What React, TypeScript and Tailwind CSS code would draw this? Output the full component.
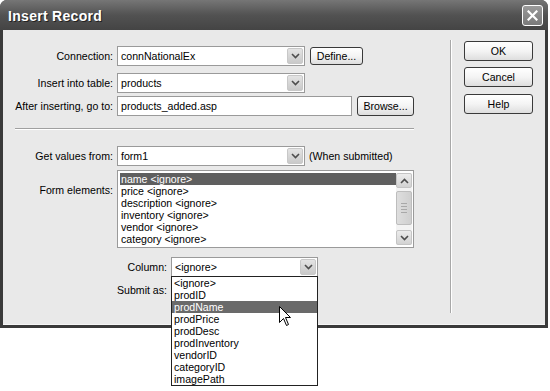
import React from "react";

const Chevron = ({ up = false }: { up?: boolean }) => (
  <svg width="9" height="6" viewBox="0 0 9 6" className={up ? "rotate-180" : ""}>
    <path d="M1 1 L4.5 4.5 L8 1" fill="none" stroke="#4d4d4d" strokeWidth="1.6" />
  </svg>
);

const ArrowBtn = () => (
  <div className="absolute right-[1px] top-[1px] bottom-[1px] w-[16px] rounded-[2px] border border-[#c8c8c8] bg-gradient-to-b from-[#e4e4e4] to-[#c9c9c9] flex items-center justify-center">
    <Chevron />
  </div>
);

const Select = ({ value, w }: { value: string; w: string }) => (
  <div className={`relative h-[20px] ${w} bg-white border border-[#9a9a9a] flex items-center pl-[3px]`}>
    <span className="leading-none">{value}</span>
    <ArrowBtn />
  </div>
);

const XpButton = ({ label, cls }: { label: string; cls: string }) => (
  <div
    className={`${cls} border border-[#3a3a3a] rounded-[3px] bg-gradient-to-b from-[#ffffff] via-[#f4f4f4] to-[#dedede] flex items-center justify-center leading-none`}
  >
    {label}
  </div>
);

const Row = ({ label, children, lw = "w-[110px]" }: { label: string; children: React.ReactNode; lw?: string }) => (
  <div className="flex items-center h-[20px]">
    <div className={`${lw} text-right shrink-0 leading-none`}>{label}</div>
    <div className="ml-[4px] flex items-center">{children}</div>
  </div>
);

export default function App() {
  const formItems = [
    "name <ignore>",
    "price <ignore>",
    "description <ignore>",
    "inventory <ignore>",
    "vendor <ignore>",
    "category <ignore>",
  ];
  const columns = [
    "<ignore>",
    "prodID",
    "prodName",
    "prodPrice",
    "prodDesc",
    "prodInventory",
    "vendorID",
    "categoryID",
    "imagePath",
  ];
  return (
    <div className="relative w-[550px] h-[391px] bg-white overflow-hidden font-['Liberation_Sans',Arial,sans-serif] text-[10.6px] text-black">
      <div className="w-[548px] h-[328px] flex flex-col bg-[#3a3a3a] rounded-t-[7px] px-[3px] pb-[3px]">
        {/* Title bar */}
        <div className="h-[30px] -mx-[3px] rounded-t-[7px] bg-gradient-to-b from-[#767676] via-[#525252] to-[#444444] flex items-center justify-between pl-[8px] pr-[5px]">
          <span className="pt-[2px] text-white font-bold text-[14px] tracking-[0.3px] [text-shadow:1px_1px_0_#222]">Insert Record</span>
          <div className="w-[21px] h-[21px] rounded-[3px] border border-white bg-gradient-to-b from-[#9a9a9a] to-[#7a7a7a] flex items-center justify-center">
            <svg width="11" height="11" viewBox="0 0 11 11">
              <path d="M1.5 1.5 L9.5 9.5 M9.5 1.5 L1.5 9.5" stroke="white" strokeWidth="2.2" strokeLinecap="square" />
            </svg>
          </div>
        </div>
        {/* Body */}
        <div className="flex-1 bg-[#e9e9e9] flex border-b border-[#f6f6f6]">
          <div className="w-[444px] shrink-0 flex flex-col pt-[16px]">
            <Row label="Connection:">
              <Select value="connNationalEx" w="w-[188px]" />
              <XpButton label="Define..." cls="ml-[5px] w-[53px] h-[18px]" />
            </Row>
            <div className="mt-[7px]">
              <Row label="Insert into table:">
                <Select value="products" w="w-[188px]" />
              </Row>
            </div>
            <div className="mt-[3px]">
              <Row label="After inserting, go to:">
                <div className="h-[20px] w-[235px] bg-white border border-[#9a9a9a] flex items-center pl-[3px] leading-none">
                  products_added.asp
                </div>
                <XpButton label="Browse..." cls="ml-[5px] w-[57px] h-[20px]" />
              </Row>
            </div>
            <div className="mt-[12px] ml-[12px] w-[399px] border-t border-[#a0a0a0] border-b border-b-white" />
            <div className="mt-[16px]">
              <Row label="Get values from:">
                <Select value="form1" w="w-[188px]" />
                <span className="ml-[4px] leading-none">(When submitted)</span>
              </Row>
            </div>
            <div className="mt-[4px] flex">
              <div className="w-[110px] text-right shrink-0 pt-[15px] leading-none">Form elements:</div>
              <div className="ml-[4px] w-[297px] h-[78px] bg-white border border-[#9a9a9a] flex p-[2px] pr-[1px]">
                <div className="flex-1 flex flex-col">
                  {formItems.map((it, i) => (
                    <div
                      key={it}
                      className={`h-[12px] leading-[12px] pl-[1px] ${i === 0 ? "bg-[#5f5f5f] text-white" : ""}`}
                    >
                      {it}
                    </div>
                  ))}
                </div>
                <div className="w-[16px] flex flex-col bg-[#f3f3f3]">
                  <div className="h-[15px] rounded-[2px] border border-[#c4c4c4] bg-gradient-to-b from-[#ececec] to-[#d2d2d2] flex items-center justify-center">
                    <Chevron up />
                  </div>
                  <div className="mt-[3px] h-[34px] rounded-[2px] border border-[#bdbdbd] bg-gradient-to-r from-[#dedede] to-[#cfcfcf] flex flex-col items-center justify-center gap-[2px]">
                    <div className="w-[6px] h-px bg-[#a8a8a8]" />
                    <div className="w-[6px] h-px bg-[#a8a8a8]" />
                    <div className="w-[6px] h-px bg-[#a8a8a8]" />
                    <div className="w-[6px] h-px bg-[#a8a8a8]" />
                  </div>
                  <div className="flex-1" />
                  <div className="h-[15px] rounded-[2px] border border-[#c4c4c4] bg-gradient-to-b from-[#ececec] to-[#d2d2d2] flex items-center justify-center">
                    <Chevron />
                  </div>
                </div>
              </div>
            </div>
            <div className="mt-[9px]">
              <Row label="Column:" lw="w-[164px]">
                <Select value="<ignore>" w="w-[147px]" />
              </Row>
            </div>
            <div className="mt-[3px]">
              <Row label="Submit as:" lw="w-[164px]">
                <span />
              </Row>
            </div>
          </div>
          {/* vertical divider */}
          <div className="ml-[3px] mt-[10px] h-[273px] w-[2px] flex">
            <div className="w-px bg-[#a8a8a8]" />
            <div className="w-px bg-white" />
          </div>
          {/* buttons */}
          <div className="ml-[12px] pt-[11px] flex flex-col">
            <XpButton label="OK" cls="w-[69px] h-[20px]" />
            <XpButton label="Cancel" cls="mt-[6px] w-[69px] h-[20px]" />
            <XpButton label="Help" cls="mt-[7px] w-[69px] h-[20px]" />
          </div>
        </div>
      </div>

      {/* dropdown list overlay */}
      <div className="absolute left-[171px] top-[276px] w-[147px] bg-white border border-[#222] flex flex-col py-0">
        {columns.map((c) => (
          <div
            key={c}
            className={`h-[12px] leading-[12px] pl-[2px] ${c === "prodName" ? "bg-[#6a6a6a] text-white" : ""}`}
          >
            {c}
          </div>
        ))}
      </div>

      {/* cursor */}
      <svg className="absolute left-[279px] top-[306px]" width="13" height="21" viewBox="0 0 13 21">
        <path
          d="M0.5 0.5 L0.5 16.5 L4.5 12.5 L7.5 19.5 L9.5 18.5 L6.5 11.5 L11.5 11.5 Z"
          fill="white"
          stroke="black"
          strokeWidth="1"
          strokeLinejoin="miter"
        />
      </svg>
    </div>
  );
}
